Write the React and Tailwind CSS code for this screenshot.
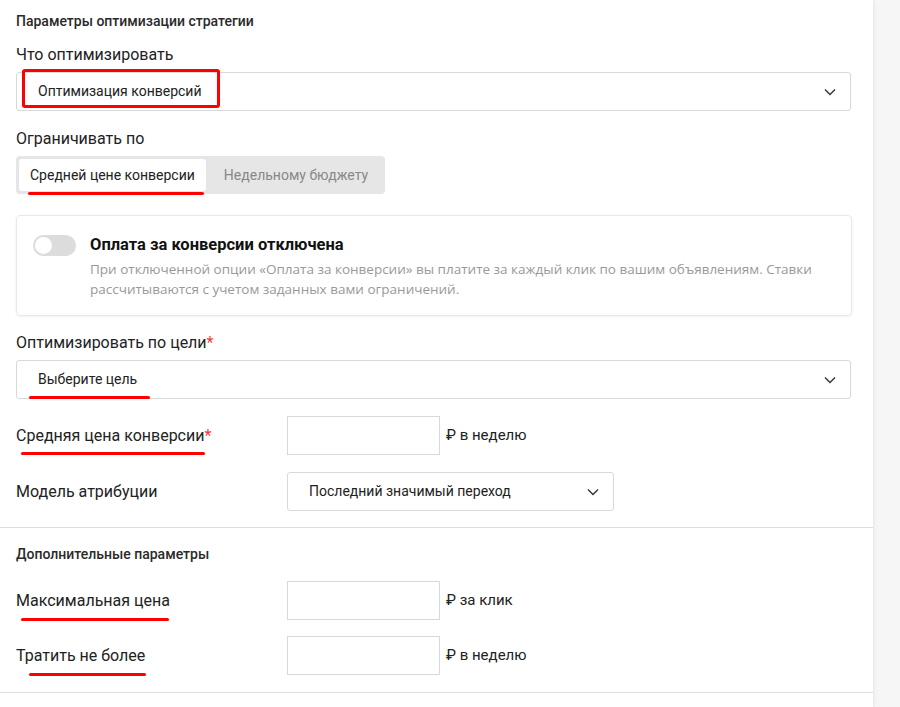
import React from "react";

const font = { fontFamily: "Roboto, 'Noto Sans', sans-serif" };

const Chevron = ({ className = "" }) => (
  <svg width="12" height="8" viewBox="0 0 12 8" className={className} fill="none">
    <path d="M1 1.5 6 6.5 11 1.5" stroke="#333" strokeWidth="1.4" />
  </svg>
);

// red hand-drawn marker line
const Mark = ({ className }) => (
  <span className={`absolute h-[3px] rounded-full bg-[#ff0000] ${className}`} />
);

const Select = ({ value, className = "" }) => (
  <div
    className={`flex h-[39px] items-center justify-between rounded-[3px] border border-[#d9d9d9] bg-white pl-[21px] pr-[14px] text-[14px] text-[#222] ${className}`}
  >
    <span>{value}</span>
    <Chevron />
  </div>
);

const PriceRow = ({ label, star, unit, mark }) => (
  <div className="relative flex items-center">
    <div className="w-[271px] text-[16px] text-[#222]">
      {label}
      {star && <span className="text-[#ff3333]">*</span>}
    </div>
    <div className="h-[39px] w-[153px] border border-[#d9d9d9] bg-white" />
    <span className="ml-[6px] text-[15px] text-[#222]">{unit}</span>
    {mark}
  </div>
);

export default function App() {
  return (
    <div className="flex min-h-[707px] bg-[#f6f6f6]" style={font}>
      <div className="w-[873px] shrink-0 bg-white shadow-[1px_0_3px_rgba(0,0,0,0.08)]">
        <div className="px-4 pt-[11px]">
          <div className="text-[14px] font-medium leading-[20px] text-[#2a2a2a]">Параметры оптимизации стратегии</div>

          <div className="mt-[13px] text-[16px] leading-[22px] text-[#222]">Что оптимизировать</div>
          <div className="relative mt-[6px] w-[835px]">
            <Select value="Оптимизация конверсий" />
            <span className="absolute left-[6px] top-[-3px] h-[39px] w-[198px] rounded-[3px] border-[3px] border-[#ff0000]" />
          </div>

          <div className="mt-[17px] text-[16px] leading-[22px] text-[#222]">Ограничивать по</div>
          <div className="relative mt-[6px] inline-flex rounded-[4px] bg-[#e6e6e6] p-[3px] text-[14px]">
            <div className="flex h-[32px] items-center rounded-[3px] bg-white px-[11px] text-[#222]">
              Средней цене конверсии
            </div>
            <div className="flex h-[32px] items-center px-[18px] pr-[14px] text-[#888]">Недельному бюджету</div>
            <Mark className="left-[12px] top-[36px] w-[176px]" />
          </div>

          <div className="mt-[21px] flex w-[836px] gap-[14px] rounded-[4px] border border-[#e8e8e8] px-[16px] pb-[16px] pt-[18px] shadow-[0_1px_3px_rgba(0,0,0,0.06)]">
            <div className="mt-[1px] flex h-[21px] w-[43px] shrink-0 items-center rounded-full bg-[#dcdcdc] p-[2px]">
              <span className="h-[17px] w-[17px] rounded-full bg-white" />
            </div>
            <div>
              <div className="text-[16.5px] font-bold leading-[22px] text-[#111]">Оплата за конверсии отключена</div>
              <div
                className="mt-[3px] text-[13.5px] leading-[20px] text-[#999]"
                style={{ fontFamily: "'Open Sans', sans-serif" }}
              >
                При отключенной опции «Оплата за конверсии» вы платите за каждый клик по вашим объявлениям. Ставки
                рассчитываются с учетом заданных вами ограничений.
              </div>
            </div>
          </div>

          <div className="mt-[16px] text-[16px] leading-[22px] text-[#222]">
            Оптимизировать по цели<span className="text-[#ff3333]">*</span>
          </div>
          <div className="relative mt-[6px] w-[835px]">
            <Select value="Выберите цель" />
            <Mark className="left-[13px] top-[36px] w-[121px]" />
          </div>

          <div className="mt-[17px] flex flex-col gap-[17px]">
            <PriceRow
              label="Средняя цена конверсии"
              star
              unit="₽ в неделю"
              mark={<Mark className="left-[5px] top-[36px] w-[184px]" />}
            />
            <div className="flex items-center">
              <div className="w-[271px] text-[16px] text-[#222]">Модель атрибуции</div>
              <Select value="Последний значимый переход" className="w-[327px]" />
            </div>
          </div>
        </div>

        <div className="mt-[16px] border-t border-[#ddd]" />

        <div className="px-4 pt-[16px]">
          <div className="text-[14px] font-medium leading-[20px] text-[#2a2a2a]">Дополнительные параметры</div>
          <div className="mt-[17px] flex flex-col gap-[16px]">
            <PriceRow
              label="Максимальная цена"
              unit="₽ за клик"
              mark={<Mark className="left-[5px] top-[37px] w-[148px]" />}
            />
            <PriceRow
              label="Тратить не более"
              unit="₽ в неделю"
              mark={<Mark className="left-[13px] top-[37px] w-[117px]" />}
            />
          </div>
        </div>

        <div className="mt-[17px] border-t border-[#ddd]" />
      </div>
    </div>
  );
}
